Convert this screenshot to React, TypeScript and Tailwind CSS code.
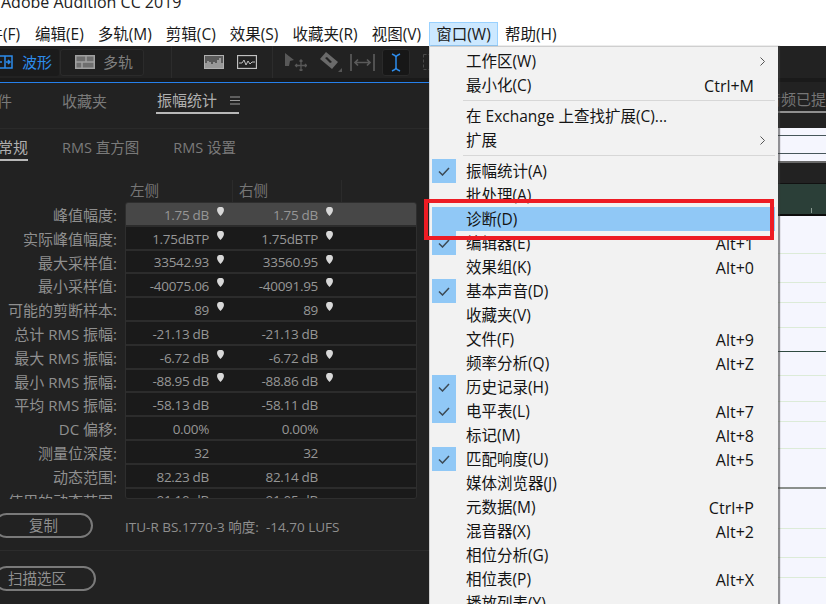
const cjk = "font-['Open_Sans','Noto_Sans_CJK_SC',sans-serif]";

const topMenus = ["编辑(E)", "多轨(M)", "剪辑(C)", "效果(S)", "收藏夹(R)", "视图(V)"];

const stats = [
  { label: "峰值幅度:", left: "1.75 dB", right: "1.75 dB", pin: true },
  { label: "实际峰值幅度:", left: "1.75dBTP", right: "1.75dBTP", pin: true },
  { label: "最大采样值:", left: "33542.93", right: "33560.95", pin: true },
  { label: "最小采样值:", left: "-40075.06", right: "-40091.95", pin: true },
  { label: "可能的剪断样本:", left: "89", right: "89", pin: true },
  { label: "总计 RMS 振幅:", left: "-21.13 dB", right: "-21.13 dB", pin: false },
  { label: "最大 RMS 振幅:", left: "-6.72 dB", right: "-6.72 dB", pin: true },
  { label: "最小 RMS 振幅:", left: "-88.95 dB", right: "-88.86 dB", pin: true },
  { label: "平均 RMS 振幅:", left: "-58.13 dB", right: "-58.11 dB", pin: false },
  { label: "DC 偏移:", left: "0.00%", right: "0.00%", pin: false },
  { label: "测量位深度:", left: "32", right: "32", pin: false },
  { label: "动态范围:", left: "82.23 dB", right: "82.14 dB", pin: false },
  { label: "使用的动态范围:", left: "91.10 dB", right: "91.05 dB", pin: false },
];

type MenuRow = { label: string; keys?: string; checked?: boolean; arrow?: boolean };

const menuTop: MenuRow[] = [
  { label: "工作区(W)", arrow: true },
  { label: "最小化(C)", keys: "Ctrl+M" },
];
const menuMid: MenuRow[] = [
  { label: "在 Exchange 上查找扩展(C)..." },
  { label: "扩展", arrow: true },
];
const menuBottom: MenuRow[] = [
  { label: "振幅统计(A)", checked: true },
  { label: "批处理(A)" },
  { label: "诊断(D)" },
  { label: "编辑器(E)", keys: "Alt+1", checked: true },
  { label: "效果组(K)", keys: "Alt+0" },
  { label: "基本声音(D)", checked: true },
  { label: "收藏夹(V)" },
  { label: "文件(F)", keys: "Alt+9" },
  { label: "频率分析(Q)", keys: "Alt+Z" },
  { label: "历史记录(H)", checked: true },
  { label: "电平表(L)", keys: "Alt+7", checked: true },
  { label: "标记(M)", keys: "Alt+8" },
  { label: "匹配响度(U)", keys: "Alt+5", checked: true },
  { label: "媒体浏览器(J)" },
  { label: "元数据(M)", keys: "Ctrl+P" },
  { label: "混音器(X)", keys: "Alt+2" },
  { label: "相位分析(G)" },
  { label: "相位表(P)", keys: "Alt+X" },
  { label: "播放列表(Y)" },
];

const trackLines = [
  "h-[38px] border-b border-[#dcebd8]",
  "h-[29px] border-b border-[#dcebd8]",
  "h-[20px] border-b border-[#dcebd8]",
  "h-[25px] border-b border-[#dcebd8]",
  "h-[24px] border-b border-[#2f4a40]",
  "h-[24px] border-b border-[#dcebd8]",
  "h-[26px] border-b border-[#dcebd8]",
  "h-[20px] border-b border-[#dcebd8]",
  "h-[27px] border-b border-[#dcebd8]",
  "h-[40px] border-b-2 border-[#8a8f8c]",
  "h-[40px] border-b border-[#dcebd8]",
  "h-[29px] border-b border-[#dcebd8]",
  "h-[20px] border-b border-[#dcebd8]",
];

function Pin() {
  return (
    <svg width="7" height="9" viewBox="0 0 7 9" className="-mt-[5px]">
      <path d="M0 3a3.5 3.2 0 0 1 7 0c0 2-2 4.500-3.500 6C2 7.500 0 5 0 3z" fill="#d8d8d8" />
    </svg>
  );
}

function Value({ text, pin }: { text: string; pin: boolean }) {
  return (
    <div className="flex w-[109px] shrink-0 items-center">
      <span className="w-[83px] pt-[2px] text-right tracking-[-0.3px] whitespace-nowrap">{text}</span>
      <span className="flex w-[26px] pl-[8px]">{pin && <Pin />}</span>
    </div>
  );
}

function StatsTable() {
  return (
    <div className="flex h-[297px] overflow-hidden">
      <div className="w-[117px] shrink-0 pt-[1px] text-right text-[15px] text-[#8f8f8f]">
        {stats.map((s) => (
          <div key={s.label} className="h-[23.800px] leading-[24px] whitespace-nowrap">
            {s.label}
          </div>
        ))}
      </div>
      <div className="ml-[8px] h-[297px] w-[292px] overflow-hidden rounded-[3px] border border-[#2e2e2e] bg-[#2c2c2c] text-[13.500px] text-[#969696]">
        {stats.map((s, i) => (
          <div
            key={s.label}
            className={
              i === 0
                ? "mb-[2px] flex h-[21.800px] items-center bg-[#474747]"
                : "mb-[2px] flex h-[21.800px] items-center bg-[#1a1a1a]"
            }
          >
            <Value text={s.left} pin={s.pin} />
            <Value text={s.right} pin={s.pin} />
          </div>
        ))}
      </div>
    </div>
  );
}

function Toolbar() {
  return (
    <div className="flex h-[32px] items-center bg-[#222222]">
      <div className="flex h-[27px] w-[59px] shrink-0 items-center rounded-r-[3px] bg-[#1b1b1b] text-[15px] text-[#2d8ceb]">
        <svg width="13" height="14" viewBox="0 0 13 14" className="mr-[9px]" fill="none" stroke="#2d8ceb" strokeWidth="1.500">
          <path d="M-2 1h14v12H-2zM5 1v12" />
          <path d="M6 7h4M8 5l2 2-2 2M-1 7h3" />
        </svg>
        波形
      </div>
      <div className="ml-[1px] flex h-[27px] w-[84px] shrink-0 items-center rounded-[3px] border border-[#2b2b2b] bg-[#1f1f1f] pl-[14px] text-[15px] text-[#7f7f7f]">
        <svg width="20" height="14" viewBox="0 0 20 14" className="mr-[8px]" fill="#6e6e6e" stroke="#a0a0a0" strokeWidth="1.500">
          <rect x="0.750" y="0.750" width="18.500" height="12.500" />
          <path d="M0 7h20M11 0v7M7 7v7" fill="none" />
        </svg>
        多轨
      </div>
      <div className="ml-[27px] h-[32px] w-[1px] shrink-0 bg-[#2c2c2c]" />
      <svg width="20" height="14" viewBox="0 0 20 14" className="ml-[32px] shrink-0">
        <rect width="20" height="14" fill="#b0b0b0" />
        <rect x="1" y="1" width="18" height="12" fill="#5a5a5a" />
        <path d="M2 13V8M4 13V6M6 13V7M8 13V9M10 13V7M12 13V8M14 13V5M16 13V3M18 13V8" stroke="#d8d8d8" />
      </svg>
      <svg width="20" height="14" viewBox="0 0 20 14" fill="none" stroke="#c0c0c0" className="ml-[13px] shrink-0">
        <rect x="0.500" y="0.500" width="19" height="13" strokeWidth="1.300" />
        <path d="M2 8h3l2-3 2 5 2-4 2 3 2-2h3" />
      </svg>
      <div className="ml-[15px] h-[32px] w-[1px] shrink-0 bg-[#2c2c2c]" />
      <svg width="22" height="18" viewBox="0 0 22 18" className="ml-[12px] shrink-0">
        <path d="M0 0l9 7-4 1-1 5-4 0z" fill="#585858" />
        <path d="M16 7v11M10.500 12.500h11M14.500 8.500L16 7l1.500 1.500M14.500 16.500L16 18l1.500-1.500M12 11l-1.500 1.500L12 14M20 11l1.500 1.500L20 14" fill="none" stroke="#585858" strokeWidth="1.300" />
      </svg>
      <svg width="23" height="22" viewBox="0 0 23 22" className="ml-[12px] shrink-0">
        <path d="M1 8l6-7 12 10-6 7z" fill="#6a6a6a" />
        <path d="M6 7l2-1 5 5-2 1z" fill="#222222" />
        <path d="M19 21h4v-4z" fill="#555555" />
      </svg>
      <svg width="25" height="17" viewBox="0 0 25 17" className="ml-[8px] shrink-0" fill="none" stroke="#5a5a5a" strokeWidth="1.700">
        <path d="M1 0v17M24 0v17M5 8.500h15M8 5.500l-3 3 3 3M17 5.500l3 3-3 3" />
      </svg>
      <div className="ml-[7px] flex h-[27px] w-[28px] shrink-0 items-center justify-center rounded-[3px] border border-[#2a2a2a] bg-[#171717]">
        <svg width="10" height="19" viewBox="0 0 10 19" fill="none" stroke="#2d8ceb" strokeWidth="1.500">
          <path d="M1 1l3 1.500L5 4v11l-1 1.500L1 18M9 1L6 2.500 5 4v11l1 1.500L9 18" />
        </svg>
      </div>
      <svg width="8" height="16" viewBox="0 0 8 16" fill="none" stroke="#4a4a4a" strokeDasharray="3 2" className="ml-[13px] shrink-0">
        <rect x="0.500" y="0.500" width="14" height="15" />
      </svg>
    </div>
  );
}

function LeftPanel() {
  return (
    <div className="flex w-[430px] shrink-0 flex-col overflow-hidden bg-[#222222]">
      <Toolbar />
      <div className="h-[4px] bg-[#1a1a1a]" />
      <div className="h-[1px] bg-[#2680eb]" />
      <div className="flex h-[46px] border-b border-[#2a2a2a] text-[15px] text-[#7a7a7a]">
        <span className="-ml-[3px] mt-[7px] w-[65px]">件</span>
        <span className="mt-[7px] w-[94px]">收藏夹</span>
        <div className="flex h-[31px] w-[83px] items-center border-b-2 border-[#b8b8b8] pt-[5px] whitespace-nowrap text-[#b0b0b0]">
          <span className="pl-[1px]">振幅统计</span>
          <svg width="10" height="9" viewBox="0 0 10 9" stroke="#9a9a9a" className="ml-[13px] shrink-0">
            <path d="M0 1h10M0 4.500h10M0 8h10" />
          </svg>
        </div>
      </div>
      <div className="flex h-[33px] text-[14.500px] text-[#7a7a7a]">
        <div className="h-[32px] w-[28px] overflow-hidden border-b-2 border-[#b8b8b8] pt-[7px] text-right text-[15px] whitespace-nowrap text-[#b0b0b0]">
          <span className="-ml-[3px]">常规</span>
        </div>
        <span className="ml-[34px] pt-[8px] whitespace-nowrap">RMS 直方图</span>
        <span className="ml-[34px] pt-[8px] whitespace-nowrap">RMS 设置</span>
      </div>
      <div className="flex h-[40px] items-end pl-[125px] text-[14.500px] text-[#767676]">
        <span className="w-[108px] border-r border-[#2b2b2b] pl-[5px]">左侧</span>
        <span className="w-[109px] border-r border-[#2b2b2b] pl-[6px]">右侧</span>
      </div>
      <StatsTable />
      <div className="mt-[14px] flex h-[24px] items-center">
        <button className="-ml-[6px] h-[25px] w-[99px] rounded-full border-2 border-[#7a7a7a] text-[14.500px] text-[#8f8f8f]">
          复制
        </button>
        <span className="ml-[32px] pt-[5px] text-[13.500px] whitespace-nowrap text-[#8f8f8f]">ITU-R BS.1770-3 响度:&nbsp; -14.70 LUFS</span>
      </div>
      <div className="mt-[13px] h-[1px] bg-[#2c2c2c]" />
      <div className="mt-[15px]">
        <button className="-ml-[6px] h-[25px] w-[102px] rounded-full border-2 border-[#7a7a7a] text-left text-[14.500px] text-[#8f8f8f]">
          <span className="pl-[12px]">扫描选区</span>
        </button>
      </div>
    </div>
  );
}

function RightPanel() {
  return (
    <div className="flex min-w-0 flex-1 flex-col overflow-hidden bg-[#222222]">
      <div className="h-[32px]" />
      <div className="h-[4px] bg-[#1a1a1a]" />
      <div className="flex h-[31px] items-center justify-end overflow-hidden border-b-2 border-[#8f8f8f] pt-[6px] text-[15px] whitespace-nowrap text-[#767676]">
        音频已提
      </div>
      <div className="h-[15px]" />
      <div className="h-[33px] bg-[#f5f6fe]">
        <div className="h-[8px] border-b border-[#46565a]" />
        <div className="h-[18px] border-b border-[#46565a]" />
      </div>
      <div className="h-[2px] bg-[#6a6a6a]" />
      <div className="h-[21px] border-b border-[#111111]" />
      <div className="flex h-[32px] items-end justify-end border-b-2 border-[#0c0c0c] bg-[#2b3f38] pr-[14px] pb-[1px]">
        <div className="h-[5px] w-[1px] bg-[#8a9a92]" />
      </div>
      <div className="flex-1 bg-[#f5f6fe]">
        {trackLines.map((c, i) => (
          <div key={i} className={c} />
        ))}
      </div>
    </div>
  );
}

function Item({ row }: { row: MenuRow }) {
  return (
    <div className="flex h-[24px] items-center text-[15.500px] text-[#141414]">
      <div className="flex h-[24px] w-[24px] shrink-0 items-center justify-center">
        {row.checked && (
          <div className="flex h-[24px] w-[24px] items-center justify-center bg-[#90c8f6]">
            <svg width="12" height="9" viewBox="0 0 12 9" fill="none" stroke="#3c4a55" strokeWidth="1.500">
              <path d="M1 4.500l3.500 3.500L11 1" />
            </svg>
          </div>
        )}
      </div>
      <span className="ml-[10px] flex-1 pt-[2px] whitespace-nowrap">{row.label}</span>
      {row.keys && <span className="mr-[24px] pt-[1px] text-[16px]">{row.keys}</span>}
      {row.arrow && (
        <svg width="5" height="9" viewBox="0 0 5 9" fill="none" stroke="#555555" className="mr-[13px]">
          <path d="M0.500 0.500l4 4-4 4" />
        </svg>
      )}
    </div>
  );
}

function WindowMenu() {
  return (
    <div className="absolute top-[46px] left-[429px] h-[558px] w-[349px] overflow-hidden border-t border-l border-[#cfcfcf] bg-[#f2f2f2] pt-[2px] pl-[2px] shadow-[2px_0_1px_rgba(60,60,60,0.55)]">
      {menuTop.map((r) => (
        <Item key={r.label} row={r} />
      ))}
      <div className="mt-[3px] mb-[3px] ml-[31px] mr-[3px] h-[1px] bg-[#d7d7d7]" />
      {menuMid.map((r) => (
        <Item key={r.label} row={r} />
      ))}
      <div className="mt-[3px] mb-[3px] ml-[31px] mr-[3px] h-[1px] bg-[#d7d7d7]" />
      {menuBottom.map((r) =>
        r.label === "诊断(D)" ? (
          <div key={r.label} className="mr-[3px] bg-[#90c8f6]">
            <Item row={r} />
          </div>
        ) : (
          <Item key={r.label} row={r} />
        ),
      )}
    </div>
  );
}

export default function App() {
  return (
    <div className={`relative flex h-[604px] w-[826px] flex-col overflow-hidden bg-white ${cjk}`}>
      <div className="h-[22px] overflow-hidden text-[16px] leading-[14px] whitespace-nowrap text-[#222222]">
        <div className="-mt-[5px] pl-[1px]">Adobe Audition CC 2019</div>
      </div>
      <div className="flex h-[24px] items-center bg-white text-[15.500px] text-[#1a1a1a]">
        <span className="-ml-[28px] w-[56px] shrink-0 pt-[2px] whitespace-nowrap">文件(F)</span>
        {topMenus.map((m) => (
          <span key={m} className="px-[7px] pt-[2px] whitespace-nowrap">
            {m}
          </span>
        ))}
        <span className="ml-[1px] flex h-[24px] w-[69px] items-center justify-center border border-[#99d1ff] bg-[#cce8ff] pt-[2px] whitespace-nowrap">
          窗口(W)
        </span>
        <span className="ml-[7px] pt-[2px] whitespace-nowrap">帮助(H)</span>
      </div>
      <div className="flex min-h-0 flex-1">
        <LeftPanel />
        <RightPanel />
      </div>
      <WindowMenu />
      <div className="absolute top-[199px] left-[424px] h-[41px] w-[350px] border-[4px] border-[#ed1c24]" />
    </div>
  );
}
